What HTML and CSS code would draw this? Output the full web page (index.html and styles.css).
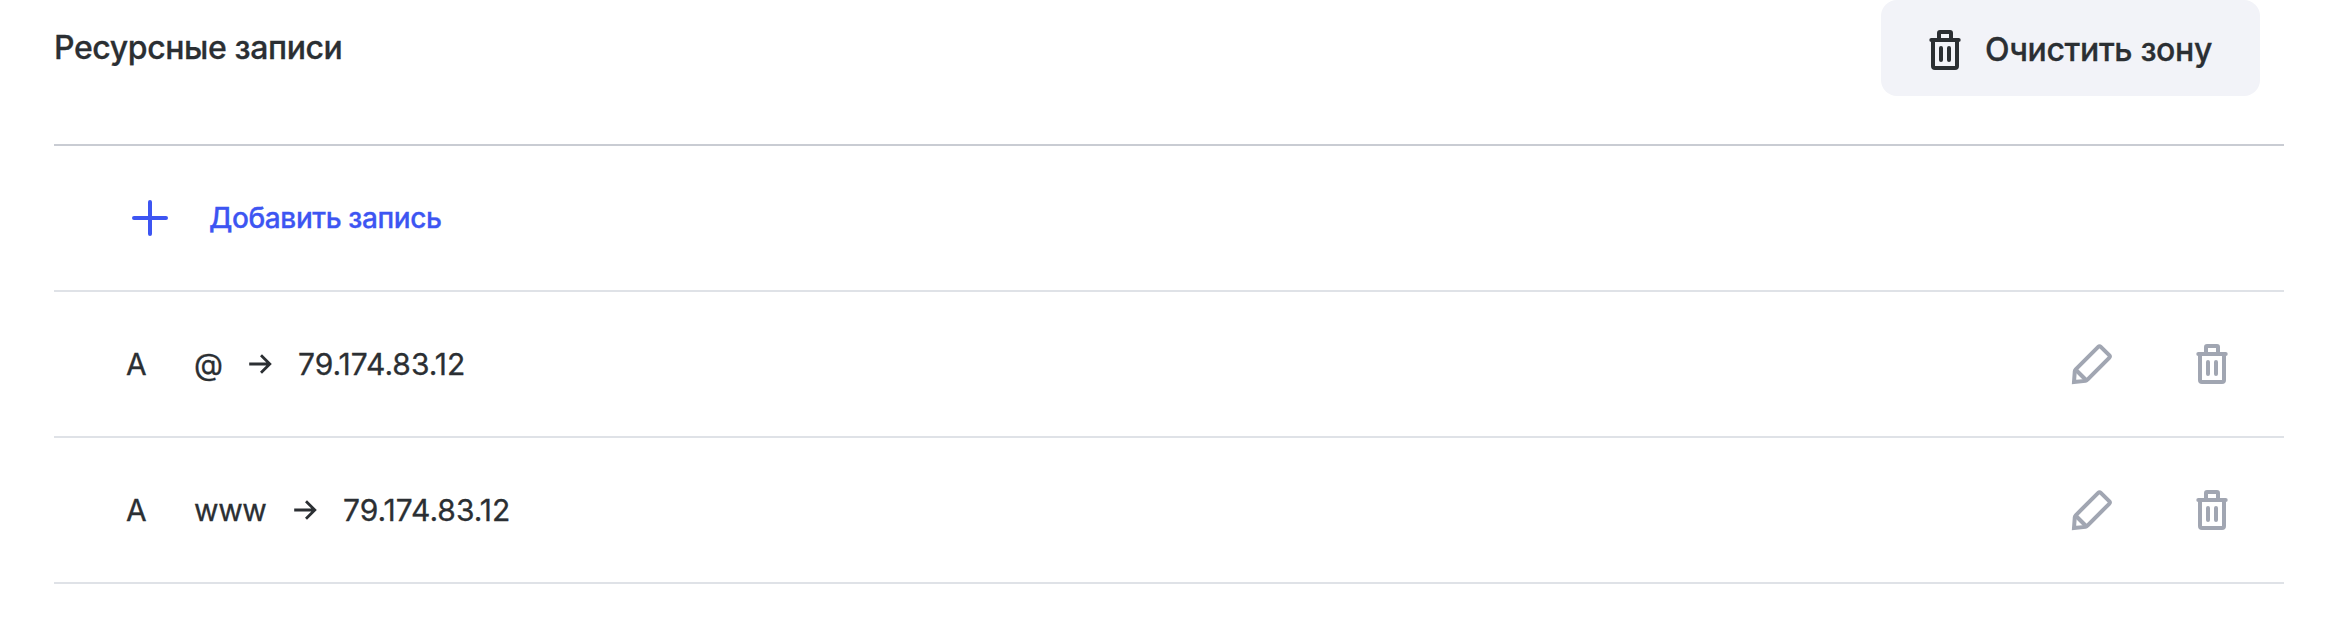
FILE: index.html
```html
<!DOCTYPE html>
<html lang="ru">
<head>
<meta charset="utf-8">
<title>Ресурсные записи</title>
<link rel="stylesheet" href="styles.css">
</head>
<body>
<svg class="sprite" width="0" height="0" aria-hidden="true">
  <symbol id="trash" viewBox="0 0 48 48">
    <g fill="none" stroke="currentColor" stroke-width="4" stroke-linecap="round">
      <path d="M10.300 14H37.700"/>
      <path d="M18 14V7q0-1 1-1H29q1 0 1 1V14" stroke-linejoin="round"/>
      <path d="M12 14V40q0 2 2 2H34q2 0 2-2V14"/>
      <path d="M20 22V34M28 22V34"/>
    </g>
  </symbol>
  <symbol id="pencil" viewBox="0 0 48 48">
    <g fill="none" stroke="currentColor" stroke-width="4">
      <path d="M30.200 6.800Q31.500 5.500 32.800 6.800L41.200 15.200Q42.500 16.500 41.200 17.800L19.500 39.500Q18.700 40.500 17.400 40.900L6 42L6.800 31.200Q6.900 30.100 7.700 29.300Z"/>
      <path d="M7.500 29.500L18.500 40.500"/>
    </g>
  </symbol>
</svg>
<main class="zone">
  <header class="zone-header">
    <h1 class="zone-title">Ресурсные записи</h1>
    <button class="clear-button"><svg class="icon"><use href="#trash"/></svg><span class="clear-label">Очистить зону</span></button>
  </header>
  <div class="row row-add">
    <svg class="plus" viewBox="0 0 36 36"><path d="M18 2V34M2 18H34" fill="none" stroke="currentColor" stroke-width="4" stroke-linecap="round"/></svg>
    <span class="add-label">Добавить запись</span>
  </div>
  <div class="row">
    <span class="type">A</span><span class="host">@</span>
    <svg class="arrow" viewBox="0 0 24 20"><path d="M1.200 10H21.500M13 1.200L21.800 10L13 18.800"/></svg>
    <span class="address">79.174.83.12</span>
    <div class="actions"><svg class="icon"><use href="#pencil"/></svg><svg class="icon"><use href="#trash"/></svg></div>
  </div>
  <div class="row">
    <span class="type">A</span><span class="host host-www">www</span>
    <svg class="arrow" viewBox="0 0 24 20"><path d="M1.200 10H21.500M13 1.200L21.800 10L13 18.800"/></svg>
    <span class="address">79.174.83.12</span>
    <div class="actions"><svg class="icon"><use href="#pencil"/></svg><svg class="icon"><use href="#trash"/></svg></div>
  </div>
</main>
</body>
</html>
```
FILE: styles.css
```css
* { box-sizing: border-box; }
body { margin: 0; background: #fff; color: #2b2f33; font-family: Inter, "Liberation Sans", sans-serif; -webkit-text-stroke: 0.3px currentColor; }
.sprite { display: block; }
.zone { width: 2230px; margin-left: 54px; }
.zone-header { display: flex; justify-content: space-between; align-items: flex-start; height: 146px; padding-right: 24px; border-bottom: 2px solid #c9ccd3; }
.zone-title { margin: 28px 0 0; font-size: 32px; line-height: 40px; font-weight: 500; letter-spacing: -0.4px; white-space: nowrap; }
.clear-button { display: flex; align-items: center; width: 379px; height: 96px; padding: 4px 0 0 40px; border: 0; border-radius: 16px; background: #f2f3f8; color: inherit; font: 500 32px/40px Inter, "Liberation Sans", sans-serif; letter-spacing: -0.35px; white-space: nowrap; }
.clear-label { margin-left: 16px; }
.icon { display: block; flex: none; width: 48px; height: 48px; }
.row { display: flex; align-items: center; height: 146px; border-bottom: 2px solid #dfe2e7; font-size: 30px; line-height: 40px; white-space: nowrap; }
.row-add { color: #3d55f2; }
.plus { width: 36px; height: 36px; margin-left: 78px; }
.add-label { margin-left: 41px; font-size: 28px; font-weight: 500; letter-spacing: -0.4px; }
.type { width: 68px; margin-left: 72px; }
.host { width: 54px; }
.host-www { width: 99px; letter-spacing: -0.4px; }
.arrow { width: 24px; height: 20px; fill: none; stroke: #2b2f33; stroke-width: 2.8px; }
.address { margin-left: 26px; }
.actions { display: flex; gap: 72px; margin-left: auto; margin-right: 48px; color: #a1a6b2; }
```
